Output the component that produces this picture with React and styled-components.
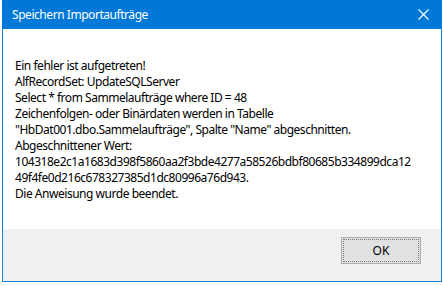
import React from "react";
import styled, { createGlobalStyle } from "styled-components";

const GlobalStyle = createGlobalStyle`
  html, body {
    margin: 0;
    padding: 0;
    background: #ffffff;
  }
  body {
    font-family: "Noto Sans", "Open Sans", sans-serif;
  }
`;

const Frame = styled.div`
  margin-left: 2px;
  width: 440px;
  height: 282px;
  box-sizing: border-box;
  border: 1px solid #1883d7;
  border-top: none;
  display: flex;
  flex-direction: column;
  background: #ffffff;
`;

const TitleBar = styled.div`
  height: 29px;
  margin: 0 -1px;
  background: #0078d7;
  display: flex;
  align-items: center;
  justify-content: space-between;
  padding: 0 12px 0 10px;
  flex-shrink: 0;
`;

const Title = styled.span`
  color: #ffffff;
  font-size: 12px;
  letter-spacing: -0.45px;
`;

const CloseButton = styled.div`
  width: 14px;
  height: 14px;
  display: flex;
  align-items: center;
  justify-content: center;
`;

const Body = styled.div`
  flex: 1;
  padding: 29px 12px 0 12px;
`;

const Message = styled.div`
  font-size: 12px;
  line-height: 16px;
  letter-spacing: -0.47px;
  color: #000000;
`;

const Footer = styled.div`
  height: 52px;
  background: #f0f0f0;
  display: flex;
  align-items: flex-start;
  justify-content: flex-end;
  padding: 8px 20px 0 0;
  box-sizing: border-box;
  flex-shrink: 0;
`;

const OkButton = styled.button`
  width: 80px;
  height: 27px;
  box-sizing: border-box;
  border: 1px solid #adadad;
  background: #e1e1e1;
  padding: 1px;
  font-family: inherit;
  font-size: 12px;
  color: #000000;
  display: flex;

  & span {
    flex: 1;
    display: flex;
    align-items: center;
    justify-content: center;
    border: 1px dotted #7a7a7a;
  }
`;

const lines = [
  "Ein fehler ist aufgetreten!",
  "AlfRecordSet: UpdateSQLServer",
  "Select * from Sammelaufträge where ID = 48",
  "Zeichenfolgen- oder Binärdaten werden in Tabelle",
  "\"HbDat001.dbo.Sammelaufträge\", Spalte \"Name\" abgeschnitten.",
  "Abgeschnittener Wert:",
  "104318e2c1a1683d398f5860aa2f3bde4277a58526bdbf80685b334899dca12",
  "49f4fe0d216c678327385d1dc80996a76d943.",
  "Die Anweisung wurde beendet.",
];

const App = () => (
  <>
    <GlobalStyle />
    <Frame>
      <TitleBar>
        <Title>Speichern Importaufträge</Title>
        <CloseButton>
          <svg width="11" height="11" viewBox="0 0 11 11">
            <path d="M0.5 0.5 L10.5 10.5 M10.5 0.5 L0.5 10.5" stroke="#ffffff" strokeWidth="1.1" />
          </svg>
        </CloseButton>
      </TitleBar>
      <Body>
        <Message>
          {lines.map((line, i) => (
            <div key={i}>{line}</div>
          ))}
        </Message>
      </Body>
      <Footer>
        <OkButton>
          <span>OK</span>
        </OkButton>
      </Footer>
    </Frame>
  </>
);

export default App;
